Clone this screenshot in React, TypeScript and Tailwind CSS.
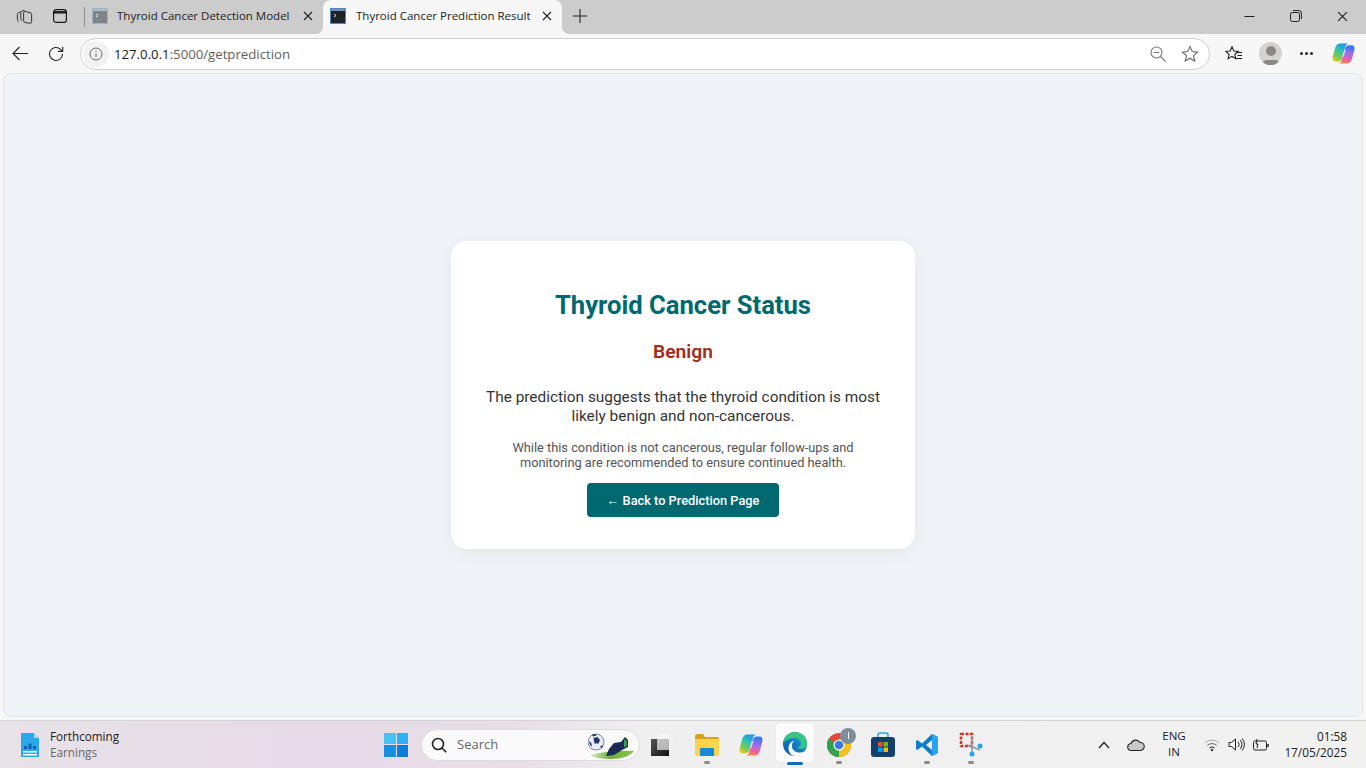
import React from "react";

function TermIcon({ dark }: { dark?: boolean }) {
  return (
    <svg width="16" height="16" viewBox="0 0 16 16">
      <rect x="0.5" y="0.5" width="15" height="15" fill={dark ? "#1f2328" : "#808387"} stroke={dark ? "#5b86b8" : "#a3b3c6"} />
      <rect x="1" y="1" width="14" height="2" fill={dark ? "#6d93c0" : "#aebccb"} />
      <path d="M4 6l2 1.5L4 9" fill="none" stroke="#fff" strokeWidth="0.8" />
    </svg>
  );
}

function CloseX({ size = 10, color = "#222" }: { size?: number; color?: string }) {
  return (
    <svg width={size} height={size} viewBox="0 0 10 10">
      <path d="M1 1l8 8M9 1l-8 8" stroke={color} strokeWidth="1.1" fill="none" />
    </svg>
  );
}

function CopilotIcon({ id, size }: { id: string; size: number }) {
  return (
    <svg width={size} height={size} viewBox="0 0 24 24">
      <defs>
        <linearGradient id={id + "a"} x1="0.7" y1="0" x2="0.2" y2="1">
          <stop offset="0" stopColor="#1f8fee" />
          <stop offset="0.4" stopColor="#2fc4b0" />
          <stop offset="0.75" stopColor="#7ccb4a" />
          <stop offset="1" stopColor="#f5c92e" />
        </linearGradient>
        <linearGradient id={id + "b"} x1="0.6" y1="0" x2="0.4" y2="1">
          <stop offset="0" stopColor="#2f78f2" />
          <stop offset="0.45" stopColor="#a56bec" />
          <stop offset="0.8" stopColor="#f0609a" />
          <stop offset="1" stopColor="#f58a3c" />
        </linearGradient>
      </defs>
      <path d="M8 1.500h9c-1.500.5-2.500 1.500-3 3L11.500 14l-1.200 3.500C9.500 19.500 8 20.500 6 20.500H3.500C1.200 20.500 0 18.500.6 16L2.800 7.500C3.600 4 5.500 1.500 8 1.500z" fill={"url(#" + id + "a)"} />
      <path d="M16 22.500H7c1.500-.5 2.500-1.500 3-3L12.500 10l1.200-3.500C14.500 4.500 16 3.500 18 3.500h2.500c2.300 0 3.500 2 2.900 4.500l-2.200 8.500c-.8 3.500-2.700 6-5.200 6z" fill={"url(#" + id + "b)"} />
      <path d="M10.500 16l1.800-1 2.400-7.500-2 .8z" fill="#fff" opacity="0.65" />
    </svg>
  );
}

function TabBar() {
  return (
    <div className="h-[34px] bg-[#cccccc] flex items-stretch relative text-[11.5px] text-[#222]">
      <div className="w-[84px] flex items-center pl-[16px] gap-[20px] pb-[2px] shrink-0">
        <svg width="17" height="17" viewBox="0 0 17 17" fill="none" stroke="#333" strokeWidth="1">
          <path d="M5 3.800L2.400 4.800A1.500 1.500 0 0 0 1.400 6.200v5a3 3 0 0 0 1.200 2.400" />
          <path d="M8.500 2.200L5.800 3.200a1.500 1.500 0 0 0-1 1.400v6a3 3 0 0 0 1 2.200" />
          <path d="M9.500 3.500l4.500 1.200A1.800 1.800 0 0 1 15.600 6.500v7a1.800 1.800 0 0 1-2 1.800l-4.500-.8a1.800 1.800 0 0 1-1.500-1.800V5a1.500 1.500 0 0 1 1.900-1.500z" />
        </svg>
        <svg width="14" height="14" viewBox="0 0 14 14" fill="none" stroke="#1a1a1a" strokeWidth="1.200">
          <rect x="0.600" y="0.600" width="12.800" height="12.800" rx="2.500" />
          <path d="M0.600 3.300h12.800" strokeWidth="2.400" />
        </svg>
      </div>
      <div className="w-px h-[20px] bg-[#8f8f8f] mt-[7px] shrink-0" />
      <div className="w-[238px] flex items-center pl-[7px] pb-[2px] shrink-0">
        <TermIcon />
        <span className="ml-[9px] whitespace-nowrap w-[172px]">Thyroid Cancer Detection Model</span>
        <span className="ml-[14px] flex"><CloseX /></span>
      </div>
      <div className="w-[239px] bg-[#f7f7f7] rounded-t-[8px] flex items-center pl-[7px] pb-[2px] shrink-0 relative">
        <span className="absolute -left-[8px] bottom-0 w-[8px] h-[8px] bg-[radial-gradient(circle_at_0_0,#cccccc_8px,#f7f7f7_8.500px)]" />
        <span className="absolute -right-[8px] bottom-0 w-[8px] h-[8px] bg-[radial-gradient(circle_at_100%_0,#cccccc_8px,#f7f7f7_8.500px)]" />
        <TermIcon dark />
        <span className="ml-[10px] whitespace-nowrap w-[172px]">Thyroid Cancer Prediction Result</span>
        <span className="ml-[14px] flex"><CloseX /></span>
      </div>
      <div className="ml-[10px] flex items-center pb-[2px]">
        <svg width="16" height="16" viewBox="0 0 16 16"><path d="M8 1v14M1 8h14" stroke="#222" strokeWidth="1.100" /></svg>
      </div>
      <div className="ml-auto flex items-center pr-[18px] pb-[2px] gap-[35px]">
        <svg width="11" height="11" viewBox="0 0 11 11"><path d="M0.500 5.500h10" stroke="#222" strokeWidth="1" /></svg>
        <svg width="12" height="12" viewBox="0 0 12 12" fill="none" stroke="#222" strokeWidth="1">
          <rect x="0.500" y="2.500" width="9" height="9" rx="1.800" />
          <path d="M3 0.600h6a2.400 2.400 0 0 1 2.400 2.400v6" />
        </svg>
        <CloseX size={11} />
      </div>
    </div>
  );
}

function Toolbar() {
  return (
    <div className="h-[39px] bg-[#f7f7f7] flex items-center relative">
      <div className="w-[80px] flex items-center pl-[12px] gap-[20px] shrink-0">
        <svg width="16" height="15" viewBox="0 0 16 15" fill="none" stroke="#222" strokeWidth="1.100">
          <path d="M16 7.500H1M7.500 1L1 7.500 7.500 14" />
        </svg>
        <svg width="16" height="16" viewBox="0 0 16 16" fill="none" stroke="#222" strokeWidth="1.100">
          <path d="M14.500 8a6.500 6.500 0 1 1-2-4.700l2 1.900" />
          <path d="M14.700 .8v4.600h-4.600" />
        </svg>
      </div>
      <div className="w-[1130px] h-[32px] bg-white rounded-full border border-[#d0d0d0] flex items-center shrink-0">
        <div className="w-[26px] h-[26px] ml-[2px] rounded-full bg-[#f2f2f2] flex items-center justify-center">
          <svg width="14" height="14" viewBox="0 0 14 14" fill="none" stroke="#666" strokeWidth="1">
            <circle cx="7" cy="7" r="6" />
            <path d="M7 6.200v4M7 3.600v1.200" />
          </svg>
        </div>
        <span className="ml-[5px] mt-[2px] text-[13.2px] text-[#1a1a1a] whitespace-nowrap">127.0.0.1<span className="text-[#5f5f5f]">:5000/getprediction</span></span>
        <div className="ml-auto flex items-center gap-[15px] pr-[10px]">
          <svg width="16" height="16" viewBox="0 0 16 16" fill="none" stroke="#777" strokeWidth="1.100">
            <circle cx="6.500" cy="6.500" r="5.500" />
            <path d="M3.800 6.500h5.400M10.500 10.500l5 5" />
          </svg>
          <svg width="18" height="18" viewBox="0 0 18 18" fill="none" stroke="#666" strokeWidth="1.100">
            <path d="M9 1.600l2.200 5 5.400.5-4.100 3.600 1.300 5.300L9 13.200 4.200 16l1.300-5.300L1.400 7.100l5.400-.5z" />
          </svg>
        </div>
      </div>
      <div className="flex items-center ml-[15px]">
        <svg width="18" height="18" viewBox="0 0 18 18" fill="none" stroke="#222" strokeWidth="1.100">
          <path d="M7 1.800l1.800 4.200 4.400.4-3.300 2.900 1 4.300L7 11.400l-3.900 2.300 1-4.300L.8 6.400l4.400-.4z" />
          <path d="M12 7.500h5M12.500 10.500h4.500M11.500 13.500h5.500" />
        </svg>
        <div className="ml-[16px] w-[23px] h-[23px] rounded-full bg-[#d5d3d0] relative overflow-hidden flex justify-center">
          <div className="w-[10px] h-[10px] rounded-full bg-[#8b8783] mt-[4px]" />
          <div className="absolute bottom-[-5px] w-[18px] h-[10px] rounded-full bg-[#8b8783]" />
        </div>
        <div className="flex gap-[2px] ml-[18px]">
          <span className="w-[3px] h-[3px] rounded-full bg-[#222]" />
          <span className="w-[3px] h-[3px] rounded-full bg-[#222]" />
          <span className="w-[3px] h-[3px] rounded-full bg-[#222]" />
        </div>
        <span className="ml-[19px] flex"><CopilotIcon id="cpTop" size={23} /></span>
      </div>
    </div>
  );
}

function Card() {
  return (
    <div className="w-[464px] h-[308px] bg-white rounded-[16px] shadow-[0_4px_20px_rgba(0,0,0,0.06)] px-[24px] pt-[48px] flex flex-col items-center text-center">
      <h1 className="text-[25.6px] leading-[32px] font-bold text-[#00696f]">Thyroid Cancer Status</h1>
      <h2 className="mt-[17px] text-[19.2px] leading-[28px] font-semibold text-[#a52a20]">Benign</h2>
      <p className="mt-[22px] text-[15.4px] leading-[19px] text-[#333]">The prediction suggests that the thyroid condition is most likely benign and non-cancerous.</p>
      <p className="mt-[14px] text-[12.8px] leading-[15px] text-[#555] w-[360px]">While this condition is not cancerous, regular follow-ups and monitoring are recommended to ensure continued health.</p>
      <div className="mt-[13px] w-[192px] h-[34px] pt-[1px] bg-[#00696f] rounded-[4px] flex items-center justify-center text-[12.8px] font-medium text-white whitespace-pre"><span className="font-['Liberation_Sans',sans-serif] font-normal">←</span> Back to Prediction Page</div>
    </div>
  );
}

function Dot() {
  return <span className="absolute bottom-[5px] left-1/2 -ml-[3px] w-[6px] h-[3px] rounded-full bg-[#8a8a8a]" />;
}

function Slot({ children, dot, className }: { children: React.ReactNode; dot?: boolean; className?: string }) {
  return (
    <div className={"relative w-[44px] h-[48px] flex items-center justify-center shrink-0 " + (className ?? "")}>
      {children}
      {dot && <Dot />}
    </div>
  );
}

function Taskbar() {
  return (
    <div className="h-[48px] border-t border-[#d6d3d6] bg-[linear-gradient(90deg,#e8e2e9_0%,#e6dbe7_25%,#e8dfe8_38%,#f0eff0_47%,#f1f1f0_100%)] flex items-center relative">
      <div className="w-[380px] flex items-center pl-[21px] shrink-0">
        <svg width="18" height="24" viewBox="0 0 18 24">
          <path d="M0 0h13l5 5v19H0z" fill="#29a8ee" />
          <path d="M13 0l5 5h-5z" fill="#a9ddf8" />
          <path d="M3 13h3v3H3zM7.500 10.500h3V16h-3zM12 13h3v3h-3z" fill="#0b5fb0" />
          <path d="M2 18h14v1.500H2zM2 21h14v1.500H2z" fill="#fff" />
        </svg>
        <div className="ml-[11px] -mt-[2px] text-[11.7px] leading-[16px]">
          <div className="text-[#1c1c1c]">Forthcoming</div>
          <div className="text-[#666]">Earnings</div>
        </div>
      </div>
      <div className="ml-[4px] w-[24px] grid grid-cols-2 gap-[1px] shrink-0">
        <span className="h-[11.5px] bg-[#45c3f5]" />
        <span className="h-[11.5px] bg-[#2fb0f0]" />
        <span className="h-[11.5px] bg-[#1a8fe0]" />
        <span className="h-[11.5px] bg-[#0f7cd6]" />
      </div>
      <div className="ml-[13px] w-[219px] h-[32px] bg-[#fafafa] rounded-full border border-[#dcdcdc] flex items-center relative shrink-0">
        <svg className="ml-[9px]" width="16" height="16" viewBox="0 0 16 16" fill="none" stroke="#222" strokeWidth="1.600">
          <circle cx="7" cy="7" r="5.500" />
          <path d="M11 11l4.200 4.200" />
        </svg>
        <span className="ml-[10px] text-[13px] text-[#666]">Search</span>
        <svg className="absolute right-[1px] top-[1px]" width="50" height="29" viewBox="0 0 50 29">
          <defs>
            <linearGradient id="turf" x1="0" y1="0" x2="1" y2="0">
              <stop offset="0" stopColor="#dfeccb" />
              <stop offset="0.45" stopColor="#6fb03c" />
              <stop offset="1" stopColor="#8cc252" />
            </linearGradient>
          </defs>
          <path d="M2 24c12-3 30-5 44-4-4 5-12 8-22 8-10 0-18-1-22-4z" fill="url(#turf)" />
          <circle cx="8" cy="11" r="8" fill="#e8ecf6" stroke="#2d3a66" strokeWidth="0.600" />
          <path d="M5.500 7l4-1 2.500 3-1.500 3.500-4 0zM0.800 10l2.500 2 .7 3.500 -2-1.500zM12 15.500l3-1.500-1 3.500zM4 3.500l3.500-.5 1 1.500-3.500 1z" fill="#26356b" />
          <path d="M18 25l3-7 5-6 7-1 4-5 3 3v7l-6 3-8 5z" fill="#1d2a55" />
          <path d="M36 8l3 2v5l-3 1.500z" fill="#3f9a48" />
        </svg>
      </div>
      <Slot className="ml-[1px]">
        <div className="relative w-[24px] h-[24px]">
          <div className="absolute left-[0px] bottom-[1px] w-[18px] h-[17px] bg-[linear-gradient(135deg,#555,#111)]" />
          <div className="absolute right-[0px] top-[0px] w-[18px] h-[17px] bg-[linear-gradient(135deg,#ffffff,#ececec)] opacity-70 border border-[#eee]" />
        </div>
      </Slot>
      <Slot dot>
        <svg width="24" height="22" viewBox="0 0 24 22">
          <path d="M0 2a2 2 0 0 1 2-2h6l2 3h12a2 2 0 0 1 2 2v3H0z" fill="#d9a21b" />
          <path d="M0 5h24v15a2 2 0 0 1-2 2H2a2 2 0 0 1-2-2z" fill="#fbd34d" />
          <rect x="5" y="14" width="14" height="8" rx="1" fill="#1b87d6" />
        </svg>
      </Slot>
      <Slot>
        <CopilotIcon id="cpBar" size={24} />
      </Slot>
      <Slot>
        <span className="absolute left-[3px] top-[2px] w-[38px] h-[39px] rounded-[4px] bg-[#fbfbfb] shadow-[0_0_1px_rgba(0,0,0,0.12)]" />
        <svg className="relative -mt-[1px]" width="24" height="24" viewBox="0 0 24 24">
          <defs>
            <linearGradient id="edgeG" x1="0" y1="1" x2="1" y2="0">
              <stop offset="0" stopColor="#0c59a4" />
              <stop offset="1" stopColor="#1ba1e2" />
            </linearGradient>
          </defs>
          <circle cx="12" cy="12" r="12" fill="url(#edgeG)" />
          <path d="M1 8C3 3 7 0 12 0c7 0 12 5 12 11.500 0 3.500-2.500 5.500-5.500 5.500-2 0-3.500-.8-4-2 2 0 3.500-1.500 3.500-3.500C18 8.500 15 6 11.500 6 7 6 3.500 8 1 10z" fill="#39c481" />
          <path d="M15 24c-5 1-9-2-9.500-7-.2-4 2.500-8 6-8.500-2 1.500-3 4-2.500 6.500.7 4 5 6 9 5.500 1.500-.2 3-.8 4-1.500-1.500 2.500-4 4.300-7 5z" fill="#fbfbfb" />
        </svg>
        <span className="absolute bottom-[4px] left-[14px] w-[16px] h-[3px] rounded-full bg-[#0f6cbd]" />
      </Slot>
      <Slot dot>
        <div className="relative">
          <svg className="block" width="24" height="24" viewBox="0 0 24 24">
            <circle cx="12" cy="12" r="12" fill="#e5483a" />
            <path d="M12 12L1.600 6A12 12 0 0 0 12 24l6-10z" fill="#2fa44f" />
            <path d="M12 12L12 24A12 12 0 0 0 22.400 6H12z" fill="#f6c21b" />
            <circle cx="12" cy="12" r="5.500" fill="#fff" />
            <circle cx="12" cy="12" r="4.300" fill="#3a78e7" />
          </svg>
          <div className="absolute -top-[5px] -right-[5px] w-[16px] h-[16px] rounded-full bg-[#7d8f9b] flex items-center justify-center">
            <span className="w-[1px] h-[7px] bg-white" />
          </div>
        </div>
      </Slot>
      <Slot>
        <svg width="24" height="25" viewBox="0 0 24 25">
          <path d="M7 6V3a2 2 0 0 1 2-2h6a2 2 0 0 1 2 2v3" fill="none" stroke="#2aa5dc" strokeWidth="1.500" />
          <rect x="0" y="5" width="24" height="20" rx="3" fill="#14406e" />
          <rect x="7" y="10" width="4.500" height="4.500" fill="#ea4f28" />
          <rect x="12.500" y="10" width="4.500" height="4.500" fill="#7bb900" />
          <rect x="7" y="15.500" width="4.500" height="4.500" fill="#00a2ed" />
          <rect x="12.500" y="15.500" width="4.500" height="4.500" fill="#fbb900" />
        </svg>
      </Slot>
      <Slot dot>
        <svg width="24" height="24" viewBox="0 0 24 24">
          <path d="M17 1l6 3v16l-6 3L7 13.500 2.500 17 1 16v-8l1.500-1L7 10.500z" fill="#0e7fcb" />
          <path d="M17 1l6 3v16l-6 3z" fill="#2aa3ee" />
          <path d="M17 7v10l-6-5z" fill="#f1f1f0" />
        </svg>
      </Slot>
      <Slot dot>
        <svg width="24" height="25" viewBox="0 0 24 25">
          <path d="M2 2h11v12H2z" fill="none" stroke="#d8331f" strokeWidth="2.500" strokeDasharray="3 1.500" />
          <path d="M13 4v17M8 13l13 5" stroke="#8a97a5" strokeWidth="1.500" />
          <circle cx="21" cy="14" r="2.500" fill="#2da3e0" />
          <circle cx="13" cy="22" r="2.500" fill="#2da3e0" />
        </svg>
      </Slot>
      <div className="ml-auto flex items-center shrink-0">
        <svg width="12" height="8" viewBox="0 0 12 8" fill="none" stroke="#222" strokeWidth="1.300"><path d="M1 7l5-5.500L11 7" /></svg>
        <svg className="ml-[17px]" width="18" height="14" viewBox="0 0 18 14" fill="#c8c8c8" stroke="#222" strokeWidth="1.100">
          <path d="M4.500 12.500a3.500 3.500 0 0 1-.5-7A5 5 0 0 1 13 4.500a4 4 0 0 1 .5 8z" />
        </svg>
        <div className="ml-[17px] -mt-[2px] w-[24px] text-center text-[11.500px] leading-[16px] text-[#222]">
          <div>ENG</div>
          <div>IN</div>
        </div>
        <svg className="ml-[18px]" width="16" height="14" viewBox="0 0 16 14" fill="none" strokeWidth="1">
          <path d="M1 5a10 10 0 0 1 14 0" stroke="#aaa" />
          <path d="M3.200 7.500a7 7 0 0 1 9.600 0" stroke="#666" />
          <path d="M5.500 10a3.600 3.600 0 0 1 5 0" stroke="#222" />
          <circle cx="8" cy="12" r="0.800" fill="#222" stroke="#222" />
        </svg>
        <svg className="ml-[8px]" width="17" height="15" viewBox="0 0 17 15" fill="none" stroke="#222" strokeWidth="1">
          <path d="M1 5.500h2.500L7.500 2v11l-4-3.500H1z" />
          <path d="M10 5a3.500 3.500 0 0 1 0 5M12 3a6 6 0 0 1 0 9M14 1.500a8.500 8.500 0 0 1 0 12" />
        </svg>
        <svg className="ml-[8px]" width="16" height="14" viewBox="0 0 16 14" fill="none" stroke="#222" strokeWidth="1">
          <rect x="0.500" y="3" width="13" height="9" rx="1.500" />
          <path d="M15 6v3" strokeWidth="1.500" />
          <path d="M4 1l-1 5h2l-1 4" />
        </svg>
        <div className="ml-[15px] -mt-[2px] w-[69px] pr-[6px] text-right text-[11.8px] leading-[16px] text-[#222]">
          <div>01:58</div>
          <div className="whitespace-nowrap">17/05/2025</div>
        </div>
        <div className="w-[13px]" />
      </div>
    </div>
  );
}

export default function App() {
  return (
    <div className="w-[1366px] h-[768px] overflow-hidden flex flex-col bg-[#f7f7f7] font-['Roboto',sans-serif]">
      <div className="font-['Open_Sans',sans-serif]">
        <TabBar />
        <Toolbar />
      </div>
      <div className="flex-1 px-[3px] pb-[3px] min-h-0">
        <div className="h-full rounded-[8px] border border-[#e4e4e4] bg-[#f0f4f8] flex items-center justify-center">
          <Card />
        </div>
      </div>
      <div className="font-['Open_Sans',sans-serif]">
        <Taskbar />
      </div>
    </div>
  );
}
